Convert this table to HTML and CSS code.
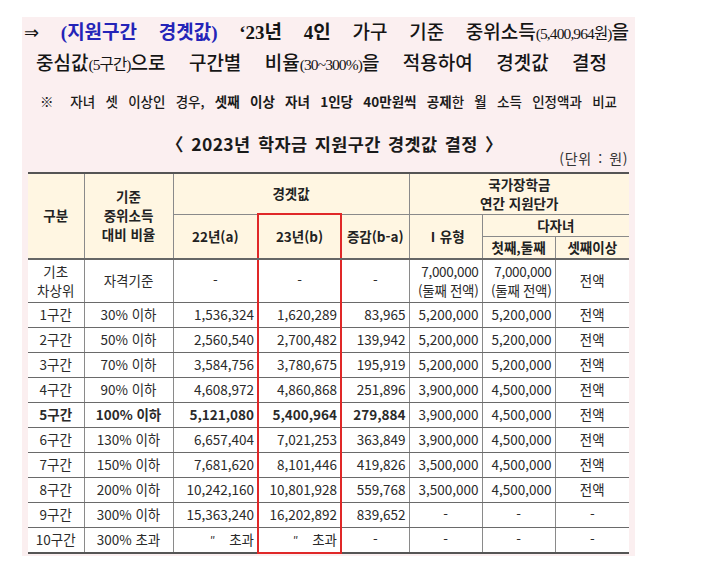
FILE: index.html
```html
<!DOCTYPE html>
<html lang="ko">
<head>
<meta charset="utf-8">
<link rel="stylesheet" href="styles.css">
</head>
<body>
<div class="panel">
  <div class="lead line1"><span class="arrow">⇒</span> <b class="blue">(지원구간 경곗값)</b> <b>‘23년 4인</b> 가구 기준 중위소득<span class="small">(5,400,964원)</span>을</div>
  <div class="lead line2">중심값<span class="small">(5구간)</span>으로 구간별 비율<span class="small">(30~300%)</span>을 적용하여 경곗값 결정</div>
  <div class="note">※ 자녀 셋 이상인 경우, <b>셋째 이상 자녀 1인당 40만원씩 공제</b>한 월 소득 인정액과 비교</div>
  <div class="title">〈 2023년 학자금 지원구간 경곗값 결정 〉</div>
  <div class="unit">(단위 : 원)</div>
  <table class="grid">
    <colgroup>
      <col class="c1"><col class="c2"><col class="c3"><col class="c4"><col class="c5"><col class="c6"><col class="c7"><col class="c8">
    </colgroup>
    <thead>
      <tr class="h1">
        <th rowspan="3" class="first">구분</th>
        <th rowspan="3" class="multi">기준<br>중위소득<br>대비 비율</th>
        <th colspan="3">경곗값</th>
        <th colspan="3" class="last multi">국가장학금<br>연간 지원단가</th>
      </tr>
      <tr class="h2">
        <th rowspan="2">22년(a)</th>
        <th rowspan="2" class="hl hltop">23년(b)</th>
        <th rowspan="2">증감(b-a)</th>
        <th rowspan="2">Ⅰ유형</th>
        <th colspan="2" class="last">다자녀</th>
      </tr>
      <tr class="h3">
        <th>첫째,둘째</th>
        <th class="last">셋째이상</th>
      </tr>
    </thead>
    <tbody>
      <tr class="tall">
        <td class="first ctr multi">기초<br>차상위</td>
        <td class="ctr">자격기준</td>
        <td class="ctr">-</td>
        <td class="ctr hl">-</td>
        <td class="ctr">-</td>
        <td class="num two multi">7,000,000<br>(둘째 전액)</td>
        <td class="num two multi">7,000,000<br>(둘째 전액)</td>
        <td class="ctr last">전액</td>
      </tr>
      <tr><td class="first ctr">1구간</td><td class="ctr">30% 이하</td><td class="num">1,536,324</td><td class="num hl">1,620,289</td><td class="num">83,965</td><td class="num">5,200,000</td><td class="num">5,200,000</td><td class="ctr last">전액</td></tr>
      <tr><td class="first ctr">2구간</td><td class="ctr">50% 이하</td><td class="num">2,560,540</td><td class="num hl">2,700,482</td><td class="num">139,942</td><td class="num">5,200,000</td><td class="num">5,200,000</td><td class="ctr last">전액</td></tr>
      <tr><td class="first ctr">3구간</td><td class="ctr">70% 이하</td><td class="num">3,584,756</td><td class="num hl">3,780,675</td><td class="num">195,919</td><td class="num">5,200,000</td><td class="num">5,200,000</td><td class="ctr last">전액</td></tr>
      <tr><td class="first ctr">4구간</td><td class="ctr">90% 이하</td><td class="num">4,608,972</td><td class="num hl">4,860,868</td><td class="num">251,896</td><td class="num">3,900,000</td><td class="num">4,500,000</td><td class="ctr last">전액</td></tr>
      <tr class="bold"><td class="first ctr">5구간</td><td class="ctr">100% 이하</td><td class="num">5,121,080</td><td class="num hl">5,400,964</td><td class="num">279,884</td><td class="num reg">3,900,000</td><td class="num reg">4,500,000</td><td class="ctr last reg">전액</td></tr>
      <tr><td class="first ctr">6구간</td><td class="ctr">130% 이하</td><td class="num">6,657,404</td><td class="num hl">7,021,253</td><td class="num">363,849</td><td class="num">3,900,000</td><td class="num">4,500,000</td><td class="ctr last">전액</td></tr>
      <tr><td class="first ctr">7구간</td><td class="ctr">150% 이하</td><td class="num">7,681,620</td><td class="num hl">8,101,446</td><td class="num">419,826</td><td class="num">3,500,000</td><td class="num">4,500,000</td><td class="ctr last">전액</td></tr>
      <tr><td class="first ctr">8구간</td><td class="ctr">200% 이하</td><td class="num">10,242,160</td><td class="num hl">10,801,928</td><td class="num">559,768</td><td class="num">3,500,000</td><td class="num">4,500,000</td><td class="ctr last">전액</td></tr>
      <tr><td class="first ctr">9구간</td><td class="ctr">300% 이하</td><td class="num">15,363,240</td><td class="num hl">16,202,892</td><td class="num">839,652</td><td class="ctr">-</td><td class="ctr">-</td><td class="ctr last">-</td></tr>
      <tr class="end"><td class="first ctr">10구간</td><td class="ctr">300% 초과</td><td class="num"><span class="ditto">″</span>초과</td><td class="num hl hlbot"><span class="ditto">″</span>초과</td><td class="ctr">-</td><td class="ctr">-</td><td class="ctr">-</td><td class="ctr last">-</td></tr>
    </tbody>
  </table>
</div>
</body>
</html>
```

FILE: styles.css
```css
html, body {
  margin: 0;
  padding: 0;
  background: #ffffff;
}

body {
  font-family: "Noto Sans CJK KR", "Noto Sans", sans-serif;
  color: #222222;
}

.panel {
  margin: 17px 0 0 22px;
  width: 613px;
  background: #fbeff0;
  padding: 1px 6px 2px 6px;
  box-sizing: border-box;
}

.lead {
  font-family: "Liberation Serif", "Noto Sans CJK KR", serif;
  font-size: 19px;
  font-weight: 500;
  height: 30px;
  line-height: 30px;
  text-align: justify;
  text-align-last: justify;
  color: #151515;
  white-space: nowrap;
}

.lead b {
  font-weight: 700;
}

.line1 {
  margin: 0 0 0 -4px;
}

.line2 {
  margin: 1px 22px 0 8px;
}

.arrow {
  font-family: "DejaVu Sans", sans-serif;
  font-size: 18px;
  line-height: 1;
}

.blue {
  color: #2424b8;
}

.small {
  font-size: 15.5px;
  font-weight: 400;
  line-height: 1;
  letter-spacing: -0.9px;
}

.note {
  font-size: 13.5px;
  font-weight: 500;
  height: 20px;
  line-height: 20px;
  margin: 12px 12px 0 12px;
  text-align: justify;
  text-align-last: justify;
  color: #1a1a1a;
  white-space: nowrap;
}

.note b {
  font-weight: 700;
}

.title {
  font-size: 17.5px;
  font-weight: 700;
  text-align: center;
  height: 24px;
  line-height: 24px;
  margin: 21px 0 0 12px;
  letter-spacing: 0.4px;
  word-spacing: 2px;
  color: #1a1a1a;
}

.unit {
  font-size: 14px;
  height: 17px;
  line-height: 17px;
  text-align: right;
  margin: -6px 1px 0 0;
  letter-spacing: 0.6px;
  word-spacing: 2px;
  color: #333333;
}

.grid {
  margin-top: 5px;
  width: 601px;
  border-collapse: collapse;
  table-layout: fixed;
  font-size: 13.5px;
  line-height: 17px;
  background: #ffffff;
  border-top: 2px solid #555555;
  border-bottom: 2px solid #555555;
  color: #2a2a2a;
}

.c1 { width: 56px; }
.c2 { width: 89px; }
.c3 { width: 85px; }
.c4 { width: 83px; }
.c5 { width: 68px; }
.c6 { width: 73px; }
.c7 { width: 73px; }
.c8 { width: 74px; }

.grid th,
.grid td {
  border: 1px solid #8a8a8a;
  padding: 0 3px;
  white-space: nowrap;
}

.grid th {
  background: #fff6e2;
  font-weight: 700;
  font-size: 13.5px;
  line-height: 17px;
  color: #222222;
}

.grid th.multi,
.grid td.multi {
  line-height: 19px;
}

.grid .first {
  border-left: none;
}

.grid .last {
  border-right: none;
}

.h1 th { height: 39px; }
.h2 th { height: 21px; }
.h3 th { height: 21px; }

.grid thead tr.h3 th,
.grid thead th[rowspan="3"],
.grid thead th[rowspan="2"] {
  border-bottom: 2px solid #666666;
}

.grid tbody tr td {
  height: 24px;
  border-top-color: #6a6a6a;
  border-bottom-color: #6a6a6a;
}

.grid tbody tr.tall td {
  height: 42px;
}

.ctr { text-align: center; }
.num { text-align: right; }

.two {
  letter-spacing: -0.3px;
  padding: 0 2px;
}

.bold td { font-weight: 700; }
.bold td.reg { font-weight: 400; }

.ditto {
  display: inline-block;
  margin-right: 14px;
  font-size: 11px;
}

.grid .hl {
  border-left: 2px solid #e02828;
  border-right: 2px solid #e02828;
}

.grid .hltop {
  border-top: 2px solid #e02828;
}

.grid .hlbot {
  border-bottom: 2px solid #e02828;
}
```
